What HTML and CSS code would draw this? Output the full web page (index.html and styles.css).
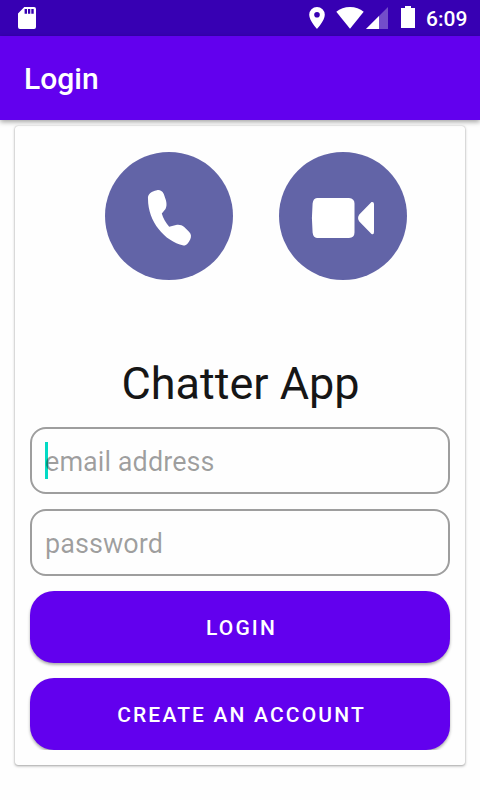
FILE: index.html
```html
<!DOCTYPE html>
<html lang="en">
<head>
<meta charset="utf-8">
<title>Login</title>
<link rel="stylesheet" href="styles.css">
</head>
<body>
<div class="status">
  <svg class="sd" width="18" height="22" viewBox="0 0 18 22"><path fill="#fff" fill-rule="evenodd" d="M6.3 0H16a2 2 0 0 1 2 2V20a2 2 0 0 1-2 2H2a2 2 0 0 1-2-2V6.5ZM6.6 2V6.7H9V2ZM10 2V6.7H12.3V2ZM13.3 2V6.7H15.7V2Z"/></svg>
  <svg class="pin" width="16" height="22" viewBox="0 0 16 22"><path fill="#fff" fill-rule="evenodd" d="M8 0A7.8 7.8 0 0 0 .2 7.8C.2 13.5 8 22 8 22S15.8 13.5 15.8 7.8A7.8 7.8 0 0 0 8 0ZM8 5A2.8 2.8 0 1 1 8 10.6A2.8 2.8 0 1 1 8 5Z"/></svg>
  <svg class="wifi" width="28" height="22" viewBox="0 0 28 22"><path fill="#fff" d="M.3 4.7C4 1.8 8.6 0 14 0S24 1.8 27.7 4.7L14 21.7Z"/></svg>
  <svg class="signal" width="22" height="22" viewBox="0 0 22 22"><path fill="#fff" fill-opacity=".3" d="M22 0V22H0Z"/><path fill="#fff" d="M13 9V22H0Z"/></svg>
  <svg class="battery" width="14" height="22" viewBox="0 0 14 22"><path fill="#fff" d="M4 0H10V2H14V22H0V2H4Z"/></svg>
  <span class="time">6:09</span>
</div>
<header class="appbar"><h1>Login</h1></header>
<main class="card">
  <div class="logo">
    <svg width="128" height="128" viewBox="0 0 128 128"><circle cx="64" cy="64" r="64" fill="#6264a7"/><path fill="#fff" d="M43 47C42.5 42 46 39.5 52 38.2C55 37.8 57 38.8 58.8 42L61 48.5C61.8 52 61.7 54.5 60.5 57L56.8 61.5C58 66 61 71 64.2 74.7L71 73C74.5 72.5 77 73.2 79.2 75L84 79.8C86.3 82 86.5 84.5 85.3 87.2C83.5 91 81.5 93.7 78.5 93.5C59.5 89.3 43 69.5 43 47Z"/></svg>
    <svg width="128" height="128" viewBox="0 0 128 128"><circle cx="64" cy="64" r="64" fill="#6264a7"/><path fill="#fff" d="M38 46H70Q75.5 46.5 75.5 51.5V80.5Q75.5 85.5 70 86H38Q34.2 85.7 33.6 80.5Q32.2 66 33.6 51.5Q34.2 46.3 38 46ZM92.5 50Q95 49.5 95 52V80Q95 83 92.5 82L80.3 69.5Q77.8 66 80.3 62.5Z"/></svg>
  </div>
  <h2>Chatter App</h2>
  <form class="form">
    <label class="field"><span class="caret"></span><span class="hint">email address</span></label>
    <label class="field"><span class="hint">password</span></label>
    <button type="button">LOGIN</button>
    <button type="button">CREATE AN ACCOUNT</button>
  </form>
</main>
</body>
</html>
```
FILE: styles.css
```css
* { box-sizing: border-box; }
body {
  margin: 0;
  height: 800px;
  overflow: hidden;
  background: #fefefe;
  font-family: Roboto, "Liberation Sans", sans-serif;
}
.status {
  display: flex;
  align-items: flex-start;
  height: 36px;
  padding: 7px 12px 0 18px;
  background: #3700b3;
  color: #fff;
}
.pin { margin-left: auto; margin-right: 11px; }
.wifi { margin-right: 2px; }
.signal { margin-right: 13px; }
.battery { margin-top: -1px; margin-right: 11px; }
.time { width: 42px; font-size: 21px; font-weight: 500; line-height: 24px; }
.appbar {
  position: relative;
  display: flex;
  align-items: center;
  height: 84px;
  padding: 1px 24px 0;
  background: #6200ee;
  color: #fff;
  box-shadow: 0 2px 5px rgba(0, 0, 0, .36);
}
.appbar h1 { margin: 0; font-size: 30px; font-weight: 500; line-height: 36px; }
.card {
  height: 639px;
  margin: 6px 15px 0;
  padding: 26px 15px 15px;
  background: #fefefe;
  border-radius: 3px;
  box-shadow: 0 1px 3px rgba(0, 0, 0, .36), 0 0 1px rgba(0, 0, 0, .25);
}
.logo { display: flex; gap: 46px; height: 203px; padding-left: 75px; }
.logo svg { flex: none; }
h2 {
  margin: 0 0 15px;
  padding-left: 1px;
  color: #161616;
  font-size: 45px;
  font-weight: 400;
  line-height: 57px;
  text-align: center;
}
.form {
  display: flex;
  flex-direction: column;
  gap: 15px;
  clip-path: inset(0 -3px 0 -3px);
}
.field {
  position: relative;
  display: flex;
  align-items: center;
  height: 67px;
  padding: 2px 13px 0;
  border: 2px solid #9e9e9e;
  border-radius: 16px;
  color: #9e9e9e;
  font-size: 27px;
  line-height: 32px;
}
.caret {
  position: absolute;
  left: 13px;
  top: 13px;
  width: 3px;
  height: 37px;
  background: #03dac5;
}
.hint { position: relative; color: rgba(0, 0, 0, .38); letter-spacing: .06px; }
button {
  height: 72px;
  padding: 2px 0 0 3px;
  border: 0;
  border-radius: 24px;
  background: #6200ee;
  color: #fff;
  font-family: inherit;
  font-size: 21px;
  font-weight: 500;
  letter-spacing: 2.15px;
  box-shadow: 0 2px 3px rgba(0, 0, 0, .32);
}
```
